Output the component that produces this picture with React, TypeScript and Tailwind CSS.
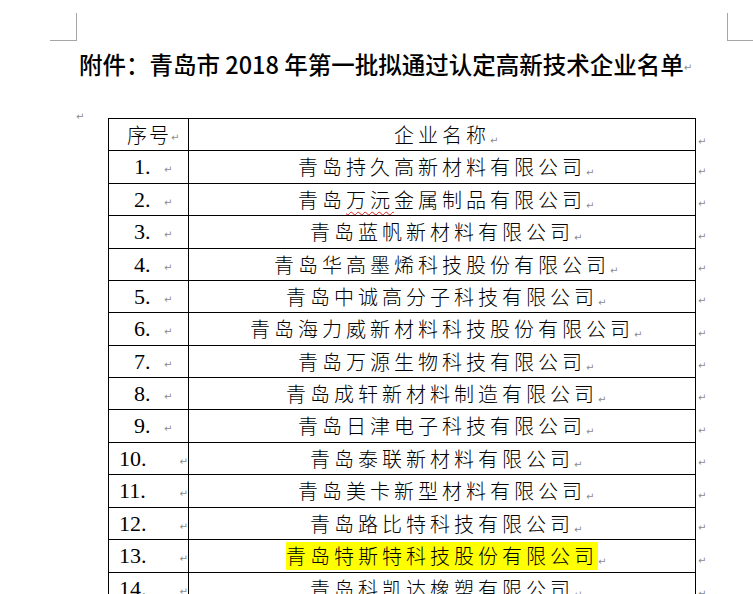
import React from "react";

const rows: { n: string; name: React.ReactNode; h: string; two?: boolean; hl?: boolean }[] = [
  { n: "1.", name: "青岛持久高新材料有限公司", h: "h-[33px]" },
  {
    n: "2.",
    name: (
      <>
        青岛<span className="underline decoration-wavy decoration-[#e02020] decoration-1 underline-offset-[3px]">万沅</span>金属制品有限公司
      </>
    ),
    h: "h-[32px]",
  },
  { n: "3.", name: "青岛蓝帆新材料有限公司", h: "h-[33px]" },
  { n: "4.", name: "青岛华高墨烯科技股份有限公司", h: "h-[32px]" },
  { n: "5.", name: "青岛中诚高分子科技有限公司", h: "h-[32px]" },
  { n: "6.", name: "青岛海力威新材料科技股份有限公司", h: "h-[33px]" },
  { n: "7.", name: "青岛万源生物科技有限公司", h: "h-[32px]" },
  { n: "8.", name: "青岛成轩新材料制造有限公司", h: "h-[32px]" },
  { n: "9.", name: "青岛日津电子科技有限公司", h: "h-[33px]" },
  { n: "10.", name: "青岛泰联新材料有限公司", h: "h-[32px]", two: true },
  { n: "11.", name: "青岛美卡新型材料有限公司", h: "h-[33px]", two: true },
  { n: "12.", name: "青岛路比特科技有限公司", h: "h-[32px]", two: true },
  { n: "13.", name: "青岛特斯特科技股份有限公司", h: "h-[33px]", two: true, hl: true },
  { n: "14.", name: "青岛科凯达橡塑有限公司", h: "h-[33px]", two: true },
];

const cjk = "font-['Noto_Sans_CJK_SC',sans-serif]";

function Mark({ className = "" }: { className?: string }) {
  return (
    <span className={`font-['DejaVu_Sans',sans-serif] text-[10px] leading-none text-[#8c8c8c] ${className}`}>↵</span>
  );
}

export default function App() {
  return (
    <div className="w-[753px] h-[594px] overflow-hidden bg-white text-black">
      <div className="flex justify-between h-[41px]">
        <div className="ml-[50px] mt-[13px] w-[27px] h-[28px] border-r border-b border-[#a6a6a6]" />
        <div className="mt-[13px] w-[26px] h-[28px] border-l border-b border-[#a6a6a6]" />
      </div>
      <div className={`h-[46px] flex items-center pl-[79px] ${cjk}`}>
        <span className="text-[23.5px] leading-[24px] font-medium">附件：青岛市 2018 年第一批拟通过认定高新技术企业名单</span>
        <Mark className="mt-[8px]" />
      </div>
      <div className="h-[31px] pl-[76px] pt-[15px]">
        <Mark />
      </div>
      <div className="ml-[108px]">
        <div className="flex h-[33px]">
          <div className="w-[81px] border-l border-r border-t border-b border-black flex items-center pl-[18px]">
            <span className={`${cjk} text-[20px] leading-none font-light tracking-[2px]`}>序号</span>
            <Mark className="mt-[6px]" />
          </div>
          <div className="w-[507px] border-r border-t border-b border-black flex items-center justify-center">
            <span className={`${cjk} text-[20px] leading-none font-light tracking-[4px]`}>企业名称</span>
            <span className="inline-block w-0 whitespace-nowrap mt-[6px]">
              <Mark />
            </span>
          </div>
          <div className="flex items-center pl-[2px] pt-[14px]">
            <Mark />
          </div>
        </div>
        {rows.map((r, i) => (
          <div key={i} className={`flex ${r.h}`}>
            <div className={`w-[81px] border-l border-r border-b border-black flex items-center ${r.two ? "pl-[10px]" : "pl-[25px]"}`}>
              <span className={`font-['Liberation_Serif',serif] text-[22px] leading-none ${r.two ? "w-[61px]" : "w-[30px]"}`}>{r.n}</span>
              <Mark className="mt-[6px]" />
            </div>
            <div className="w-[507px] border-r border-b border-black flex items-center justify-center">
              <span className={`${cjk} text-[20px] font-light tracking-[4px] ${r.hl ? "bg-[#ffff00] leading-[28px]" : "leading-none"}`}>{r.name}</span>
              <span className="inline-block w-0 whitespace-nowrap mt-[6px]">
                <Mark />
              </span>
            </div>
            <div className="flex items-center pl-[2px] pt-[8px]">
              <Mark />
            </div>
          </div>
        ))}
      </div>
    </div>
  );
}
